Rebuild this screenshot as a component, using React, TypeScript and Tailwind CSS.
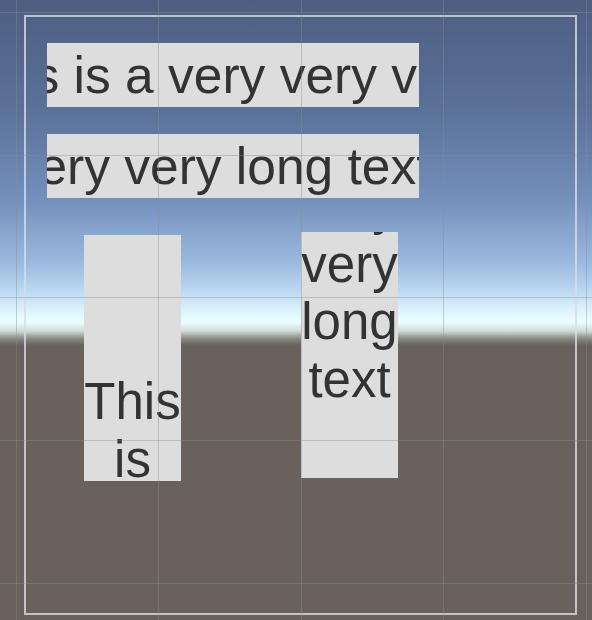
const gridX = [16, 158, 301, 443, 586];
const gridY = [12, 155, 297, 440, 583];

const font = "font-['Liberation_Sans',Arial,sans-serif]";
const label = "This is a very very very long text";
const words = label.split(" ");

export default function App() {
  return (
    <div
      className={`relative w-[592px] h-[620px] overflow-hidden pt-[15px] pl-[24px] ${font} bg-[linear-gradient(180deg,#4d5e82_0px,#5b7198_110px,#7390bb_200px,#9bb9de_262px,#bdd9f3_292px,#d9f0fc_308px,#ebffff_322px,#d0dcd8_331px,#8f8f88_338px,#69625c_345px,#69625c_620px)]`}
    >
      {/* canvas frame */}
      <div className="w-[553px] h-[600px] border-2 border-[#d8dce4]/80 pl-[21px] pt-[26px]">
        <div className="w-[372px] h-[64px] bg-[#dddddd] overflow-hidden">
          <div className="ml-[-85px] pt-[4px] whitespace-nowrap text-[51.5px] leading-[57.5px] text-[#333333]">
            {label}
          </div>
        </div>

        <div className="mt-[27px] w-[372px] h-[64px] bg-[#dddddd] overflow-hidden">
          <div className="ml-[-352px] pt-[4px] whitespace-nowrap text-[51.5px] leading-[57.5px] text-[#333333]">
            {label}
          </div>
        </div>

        <div className="mt-[34px] ml-[37px] flex items-start gap-[120px]">
          <div className="mt-[3px] w-[97px] h-[246px] bg-[#dddddd] overflow-hidden">
            <div className="pt-[138px] text-center text-[51px] leading-[57.5px] text-[#333333]">
              {words.map((w, i) => (
                <div key={i}>{w}</div>
              ))}
            </div>
          </div>
          <div className="w-[97px] h-[246px] bg-[#dddddd] overflow-hidden">
            <div className="mt-[-284px] text-center text-[51px] leading-[57.5px] text-[#333333]">
              {words.map((w, i) => (
                <div key={i}>{w}</div>
              ))}
            </div>
          </div>
        </div>
      </div>

      {/* scene grid drawn over everything */}
      <div className="pointer-events-none absolute inset-0">
        {gridX.map((x) => (
          <div key={`x${x}`} className="absolute top-0 bottom-0 w-px bg-[#8c8c8c]/40" style={{ left: x }} />
        ))}
        {gridY.map((y) => (
          <div key={`y${y}`} className="absolute left-0 right-0 h-px bg-[#8c8c8c]/40" style={{ top: y }} />
        ))}
      </div>
    </div>
  );
}
